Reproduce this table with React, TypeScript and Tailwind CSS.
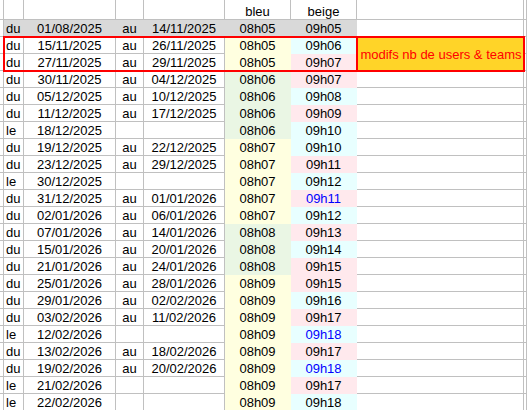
import type { ReactNode } from "react";
import clsx from "clsx";

type Row = { k: string; from: string; to?: string; b: string; g: string; blue?: boolean };

const rows: Row[] = [
  { k: "du", from: "01/08/2025", to: "14/11/2025", b: "08h05", g: "09h05" },
  { k: "du", from: "15/11/2025", to: "26/11/2025", b: "08h05", g: "09h06" },
  { k: "du", from: "27/11/2025", to: "29/11/2025", b: "08h05", g: "09h07" },
  { k: "du", from: "30/11/2025", to: "04/12/2025", b: "08h06", g: "09h07" },
  { k: "du", from: "05/12/2025", to: "10/12/2025", b: "08h06", g: "09h08" },
  { k: "du", from: "11/12/2025", to: "17/12/2025", b: "08h06", g: "09h09" },
  { k: "le", from: "18/12/2025", b: "08h06", g: "09h10" },
  { k: "du", from: "19/12/2025", to: "22/12/2025", b: "08h07", g: "09h10" },
  { k: "du", from: "23/12/2025", to: "29/12/2025", b: "08h07", g: "09h11" },
  { k: "le", from: "30/12/2025", b: "08h07", g: "09h12" },
  { k: "du", from: "31/12/2025", to: "01/01/2026", b: "08h07", g: "09h11", blue: true },
  { k: "du", from: "02/01/2026", to: "06/01/2026", b: "08h07", g: "09h12" },
  { k: "du", from: "07/01/2026", to: "14/01/2026", b: "08h08", g: "09h13" },
  { k: "du", from: "15/01/2026", to: "20/01/2026", b: "08h08", g: "09h14" },
  { k: "du", from: "21/01/2026", to: "24/01/2026", b: "08h08", g: "09h15" },
  { k: "du", from: "25/01/2026", to: "28/01/2026", b: "08h09", g: "09h15" },
  { k: "du", from: "29/01/2026", to: "02/02/2026", b: "08h09", g: "09h16" },
  { k: "du", from: "03/02/2026", to: "11/02/2026", b: "08h09", g: "09h17" },
  { k: "le", from: "12/02/2026", b: "08h09", g: "09h18", blue: true },
  { k: "du", from: "13/02/2026", to: "18/02/2026", b: "08h09", g: "09h17" },
  { k: "du", from: "19/02/2026", to: "20/02/2026", b: "08h09", g: "09h18", blue: true },
  { k: "le", from: "21/02/2026", b: "08h09", g: "09h17" },
  { k: "le", from: "22/02/2026", b: "08h09", g: "09h18" },
];

// column widths incl. the 1px gridline on the right
const W = {
  z: "w-[4px]",
  a: "w-[20px]",
  b: "w-[92px]",
  c: "w-[28px]",
  d: "w-[81px]",
  e: "w-[66px]",
  f: "w-[66px]",
  g: "w-[167px]",
  h: "w-[3px]",
};

const GRAY = "bg-[#d9d9d9]";
const odd = (t: string) => parseInt(t.slice(3), 10) % 2 === 1;

function Cell({
  w,
  bg,
  center,
  h = "h-[17px]",
  className,
  children,
}: {
  w: string;
  bg?: string;
  center?: boolean;
  h?: string;
  className?: string;
  children?: ReactNode;
}) {
  return (
    <div
      className={clsx(
        "flex shrink-0 items-end overflow-hidden whitespace-nowrap border-r border-b leading-[15px]",
        w,
        h,
        bg ? ["border-transparent", bg] : "border-[#c0c0c0]",
        center ? "justify-center" : "pl-[2px]",
        className
      )}
    >
      {children}
    </div>
  );
}

function Data({ r, first }: { r: Row; first?: boolean }) {
  const blueBg = first ? GRAY : odd(r.b) ? "bg-[#ffffe0]" : "bg-[#eaf6e4]";
  const beigeBg = first ? GRAY : odd(r.g) ? "bg-[#ffe9ed]" : "bg-[#e8ffff]";
  return (
    <>
      <Cell w={W.a} bg={first ? GRAY : undefined}>{r.k}</Cell>
      <Cell w={W.b} bg={first ? GRAY : undefined} center>{r.from}</Cell>
      <Cell w={W.c} bg={first ? GRAY : undefined} center>{r.to ? "au" : ""}</Cell>
      <Cell w={W.d} bg={first ? GRAY : undefined} center>{r.to ?? ""}</Cell>
      <Cell w={W.e} bg={blueBg} center>{r.b}</Cell>
      <Cell w={W.f} bg={beigeBg} center className={r.blue ? "text-[#0000ff]" : undefined}>
        {r.g}
      </Cell>
    </>
  );
}

function FullRow({ r, first }: { r: Row; first?: boolean }) {
  return (
    <div className="flex">
      <Cell w={W.z} />
      <Data r={r} first={first} />
      <Cell w={W.g} />
      <Cell w={W.h} />
    </div>
  );
}

export default function App() {
  return (
    <div className="h-[410px] w-[527px] overflow-hidden bg-white font-['Liberation_Sans',Arial,sans-serif] text-[13px] text-black">
      <div className="flex">
        <Cell w={W.z} h="h-[20px]" />
        <Cell w={W.a} h="h-[20px]" />
        <Cell w={W.b} h="h-[20px]" />
        <Cell w={W.c} h="h-[20px]" />
        <Cell w={W.d} h="h-[20px]" />
        <Cell w={W.e} h="h-[20px]" center>bleu</Cell>
        <Cell w={W.f} h="h-[20px]" center>beige</Cell>
        <Cell w={W.g} h="h-[20px]" />
        <Cell w={W.h} h="h-[20px]" />
      </div>

      <FullRow r={rows[0]} first />

      {/* rows with the framed note */}
      <div className="flex">
        <div className="flex flex-col">
          <Cell w={W.z} />
          <Cell w={W.z} />
        </div>
        <div className="relative z-10 flex outline-2 -outline-offset-1 outline-[#ff0000]">
          <div className="flex flex-col">
            <div className="flex">
              <Data r={rows[1]} />
            </div>
            <div className="flex">
              <Data r={rows[2]} />
            </div>
          </div>
          <div className="-ml-px flex h-[34px] w-[168px] shrink-0 items-center justify-center whitespace-nowrap border-l-2 border-[#ff0000] bg-[#ffd428] leading-[15px] text-[#ff0000]">
            modifs nb de users &amp; teams
          </div>
        </div>
        <div className="flex flex-col">
          <Cell w={W.h} />
          <Cell w={W.h} />
        </div>
      </div>

      {rows.slice(3).map((r) => (
        <FullRow key={r.from} r={r} />
      ))}
    </div>
  );
}
